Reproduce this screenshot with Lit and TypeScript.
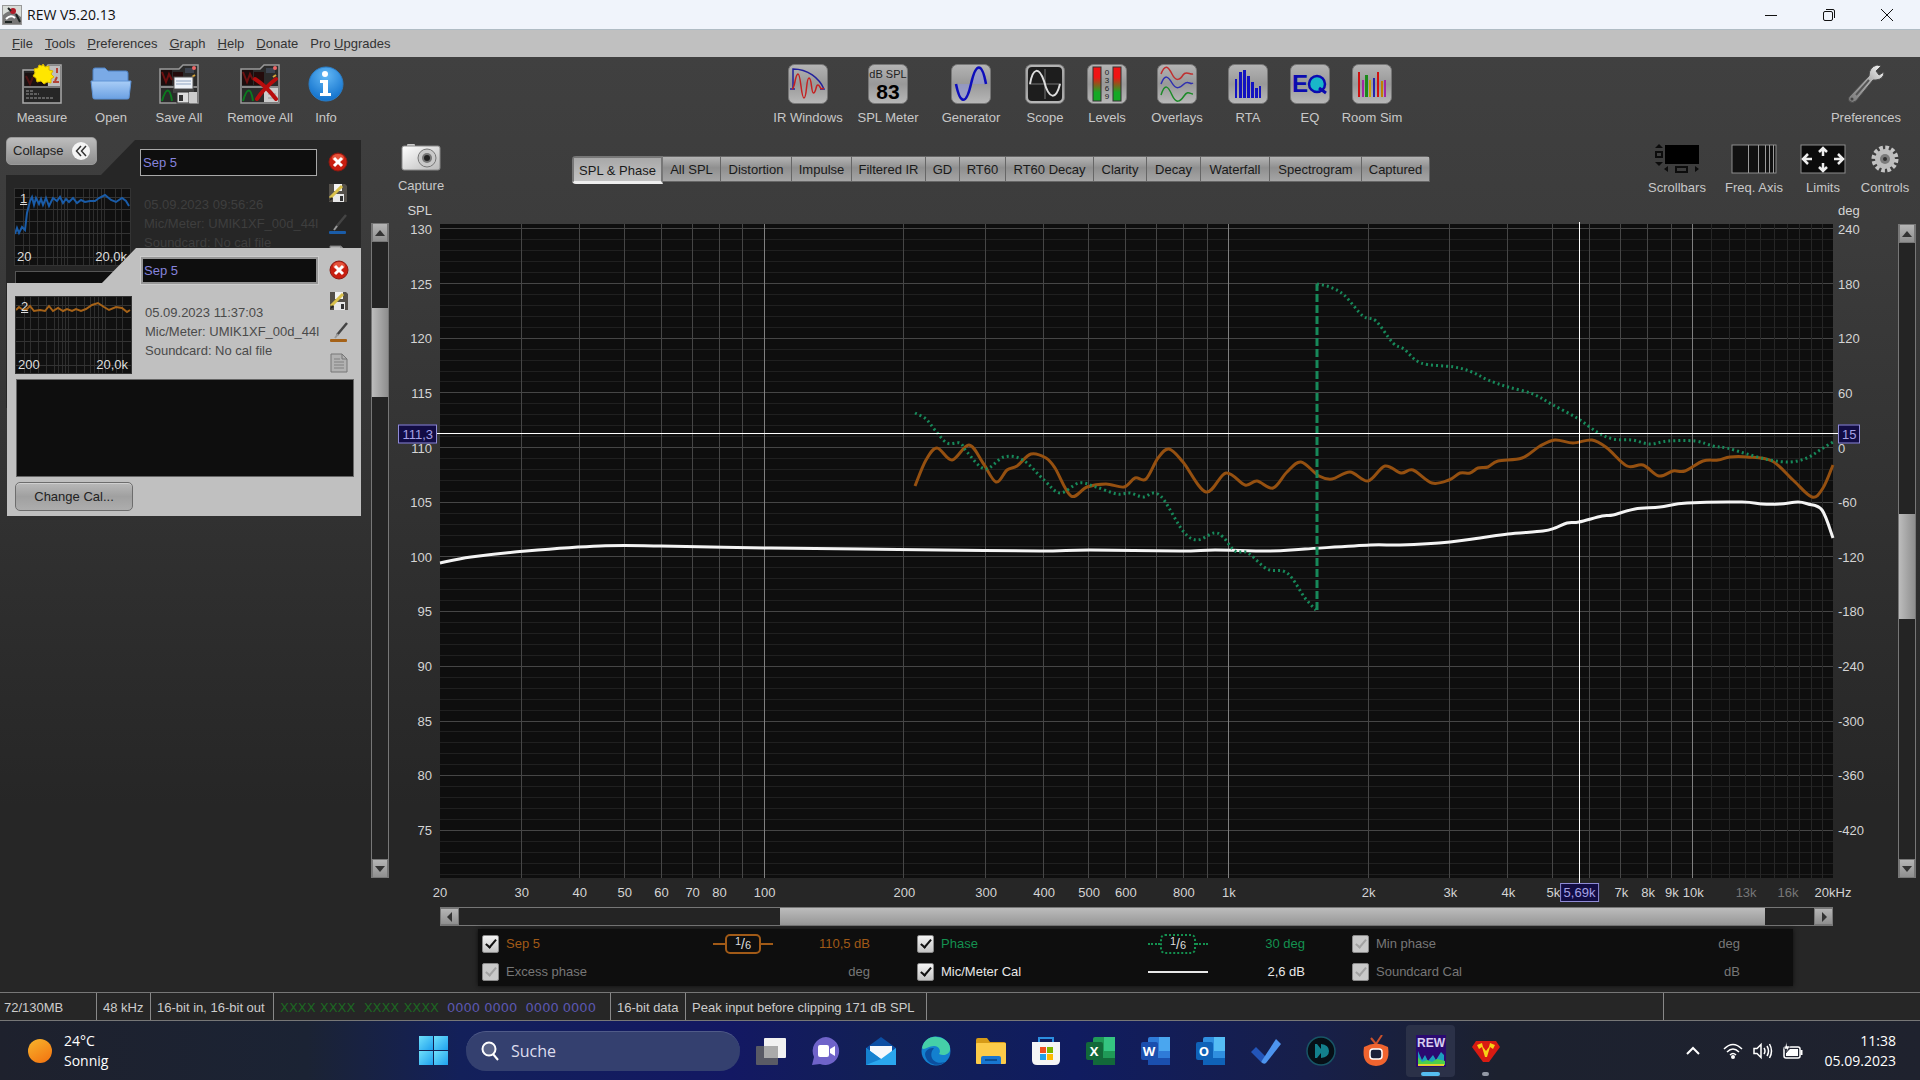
import { LitElement, html, svg, css, nothing, TemplateResult, SVGTemplateResult } from "lit";
import { customElement, property } from "lit/decorators.js";
import { classMap } from "lit/directives/class-map.js";

type Point = [number, number];

/* ---------- plot geometry and data ---------- */

const PLOT_W = 1393;
const PLOT_H = 654;
const F_MIN = 20;
const DECADES = 3;
const SPL_TOP = 130.4;
const SPL_SPAN = 59.8;

const freqPct = (f: number) => (Math.log10(f / F_MIN) / DECADES) * 100;
const splPct = (v: number) => ((SPL_TOP - v) / SPL_SPAN) * 100;

const xLabels: [number, string][] = [
  [20, "20"], [30, "30"], [40, "40"], [50, "50"], [60, "60"], [70, "70"], [80, "80"], [100, "100"],
  [200, "200"], [300, "300"], [400, "400"], [500, "500"], [600, "600"], [800, "800"], [1000, "1k"],
  [2000, "2k"], [3000, "3k"], [4000, "4k"], [5000, "5k"], [7000, "7k"], [8000, "8k"], [9000, "9k"],
  [10000, "10k"], [13000, "13k"], [16000, "16k"], [20000, "20kHz"],
];
const splLabels = [130, 125, 120, 115, 110, 105, 100, 95, 90, 85, 80, 75];
const degLabels = [240, 180, 120, 60, 0, -60, -120, -180, -240, -300, -360, -420];

const splTrace: Point[] = [
  [475, 262], [486, 236], [497, 224], [512, 236], [529, 221], [543, 239], [556, 258], [567, 246], [577, 242],
  [591, 230], [606, 234], [615, 244], [631, 272], [647, 263], [666, 260], [684, 263], [695, 254], [706, 255],
  [718, 234], [729, 225], [743, 238], [766, 268], [786, 249], [805, 261], [817, 257], [833, 264], [847, 248],
  [861, 238], [879, 252], [892, 255], [910, 248], [928, 257], [945, 242], [961, 249], [973, 246], [992, 259],
  [1009, 256], [1020, 249], [1030, 249], [1038, 244], [1048, 243], [1058, 237], [1082, 234], [1100, 222],
  [1115, 216], [1133, 219], [1152, 216], [1167, 224], [1187, 242], [1203, 241], [1219, 252], [1233, 247],
  [1245, 247], [1263, 237], [1278, 236], [1290, 233], [1307, 233], [1332, 237], [1353, 256], [1372, 273],
  [1383, 264], [1393, 241],
];
const phaseLow: Point[] = [
  [475, 189], [486, 195], [495, 206], [507, 219], [520, 219], [527, 228], [545, 245], [564, 233], [583, 236],
  [604, 256], [620, 269], [639, 259], [656, 263], [677, 270], [690, 269], [703, 273], [714, 269], [724, 276],
  [743, 307], [757, 316], [774, 309], [783, 313], [795, 327], [808, 329], [827, 345], [843, 347], [852, 354],
  [865, 374], [876, 386],
];
const phaseHigh: Point[] = [
  [877, 60], [890, 63], [904, 71], [923, 92], [936, 97], [953, 119], [964, 125], [981, 139], [1014, 143],
  [1032, 148], [1048, 156], [1068, 163], [1093, 170], [1113, 181], [1137, 194], [1157, 208], [1173, 215],
  [1192, 216], [1210, 220], [1228, 217], [1255, 217], [1273, 222], [1287, 224], [1307, 230], [1330, 236],
  [1350, 238], [1367, 234], [1380, 226], [1393, 218],
];
const calTrace: Point[] = [
  [0, 339], [31, 333], [86, 327], [160, 322], [221, 322], [324, 324], [420, 325], [500, 326], [600, 327],
  [650, 326], [740, 327], [775, 326], [830, 327], [865, 325], [930, 321], [960, 321], [1010, 318], [1040, 314],
  [1068, 310], [1103, 307], [1115, 304], [1127, 299], [1139, 298], [1162, 292], [1173, 291], [1195, 285],
  [1220, 283], [1247, 279], [1302, 278], [1322, 280], [1340, 280], [1358, 278], [1368, 280], [1382, 286],
  [1393, 314],
];

/* Cubic smoothing through the sample points. */
function smooth(p: Point[], t = 6): string {
  let d = `M${p[0][0]} ${p[0][1]}`;
  for (let i = 0; i < p.length - 1; i++) {
    const a = p[Math.max(0, i - 1)], b = p[i], c = p[i + 1], e = p[Math.min(p.length - 1, i + 2)];
    const c1x = b[0] + (c[0] - a[0]) / t, c1y = b[1] + (c[1] - a[1]) / t;
    const c2x = c[0] - (e[0] - b[0]) / t, c2y = c[1] - (e[1] - b[1]) / t;
    d += `C${c1x.toFixed(1)} ${c1y.toFixed(1)} ${c2x.toFixed(1)} ${c2y.toFixed(1)} ${c[0]} ${c[1]}`;
  }
  return d;
}

/* ---------- icons ---------- */

const ico = (w: number, h: number, body: SVGTemplateResult) =>
  html`<svg width=${w} height=${h} viewBox="0 0 ${w} ${h}" aria-hidden="true">${body}</svg>`;

const tile = (body: SVGTemplateResult) => ico(40, 40, svg`
  <defs><linearGradient id="tg" x1="0" y1="0" x2="0" y2="1"><stop offset="0" stop-color="#b4b4b4"/><stop offset=".5" stop-color="#999"/><stop offset="1" stop-color="#b8b8b8"/></linearGradient></defs>
  <rect x="0.5" y="0.5" width="39" height="39" rx="6" fill="url(#tg)" stroke="#777"/>${body}`);

const folderGrid = svg`
  <path d="M1 5H20L24 1H39V39H1Z" fill="#2b2b2b" stroke="#999" stroke-width="1.5"/>
  <rect x="2" y="6" width="11" height="15" fill="#1b0d0d"/><path d="M3 8l4 10 3-8 3 6" stroke="#6e1010" fill="none" stroke-width="2"/>
  <rect x="14" y="8" width="10" height="13" fill="#240b0b"/><path d="M2 23H38" stroke="#aaa" stroke-width="1.5"/>
  <path d="M3 37c4-14 8-14 10 0" stroke="#0b7a1e" fill="none" stroke-width="2"/>
  <rect x="26" y="4" width="9" height="5" fill="#3d4450"/><circle cx="35" cy="4" r="2" fill="#e66"/><path d="M33 13l3-2" stroke="#d7a63a" stroke-width="2"/>`;

const icons: Record<string, TemplateResult> = {
  measure: ico(40, 40, svg`
    <path d="M1 6H22L26 1H39V39H1Z" fill="#262626" stroke="#aaa" stroke-width="1.5"/>
    <rect x="3" y="9" width="22" height="13" fill="#1b1111"/><path d="M4 12l4 8 3-7" stroke="#4e1414" stroke-width="2" fill="none"/>
    <rect x="26" y="2" width="12" height="20" fill="#bdbdbd"/><path d="M35 4v5M35 13l-2 4M31 18h6" stroke="#b34336" stroke-width="2"/>
    <path d="M2 23H38" stroke="#ccc"/><path d="M4 27h8M4 30h13M4 34h28" stroke="#999" stroke-dasharray="3 1"/>
    <path d="M21 0l2 3 4-1 0 4 4 1-2 3 3 3-3 2 0 4-4-1-3 2-3-3-4 1-1-4-3-2 2-3-1-4 4-1 1-3 3 1z" fill="#ffe600" stroke="#d9b800"/>`),
  open: ico(42, 34, svg`
    <defs><linearGradient id="of" x1="0" y1="0" x2="0" y2="1"><stop offset="0" stop-color="#a9cdf7"/><stop offset="1" stop-color="#6ba0e2"/></linearGradient></defs>
    <path d="M3 3q0-2 2-2h10l3 3h18q2 0 2 2v10H3z" fill="#7aaae6" stroke="#4f82c4"/>
    <path d="M1 14h40l-2 17q0 1-2 1H5q-2 0-2-1z" fill="url(#of)" stroke="#5e93d6"/>`),
  save: ico(40, 40, svg`${folderGrid}
    <rect x="15" y="13" width="19" height="12" fill="#eef2f7" stroke="#555"/><path d="M17 17h15M17 20h15" stroke="#8ea3bf"/>
    <path d="M14 25h21v4H14z" fill="#444"/><rect x="18" y="28" width="12" height="11" fill="#ddd" stroke="#333"/><rect x="20" y="31" width="4" height="6" fill="#333"/>
    <path d="M30 28h8v11h-8z" fill="#ccc"/>`),
  remove: ico(40, 40, svg`${folderGrid}
    <path d="M24 24h14v14H24z" fill="#ccc"/><path d="M28 30h8M28 34h8" stroke="#999"/>
    <path d="M15 15Q26 22 36 35M36 15Q24 24 17 35" stroke="#b80c0c" stroke-width="4" fill="none" stroke-linecap="round"/>`),
  info: ico(36, 36, svg`
    <defs><radialGradient id="ig" cx=".5" cy=".25" r=".8"><stop offset="0" stop-color="#63b8f5"/><stop offset="1" stop-color="#0a6bc9"/></radialGradient></defs>
    <circle cx="18" cy="18" r="17" fill="url(#ig)" stroke="#2a7ec8"/>
    <circle cx="17" cy="8" r="3" fill="#fff"/><path d="M12 14h8v13h3v3H12v-3h3V17h-3z" fill="#fff"/>`),
  ir: tile(svg`<path d="M5 25V5C20 5 31 14 36 25H32" stroke="#22209c" stroke-width="1.5" fill="none"/><path d="M2 25h5" stroke="#22209c" stroke-width="1.5"/>
    <path d="M4 25C7 25 7 10 10 10C13 10 13 34 16 34C19 34 18 14 21 14C24 14 23 29 25.500 29C28 29 28 20 30 21C32 21 32 27 36 24" stroke="#c42121" stroke-width="1.5" fill="none"/>`),
  spl: tile(svg`<text x="20" y="14" text-anchor="middle" font-family="Liberation Sans" font-size="11" fill="#222">dB SPL</text>
    <text x="20" y="35" text-anchor="middle" font-family="Liberation Sans" font-weight="700" font-size="21" fill="#000">83</text>`),
  gen: tile(svg`<path d="M5 20H20Q14 52 5 20zM20 20Q28-14 36 20z" fill="#8f96d8" opacity=".6"/><path d="M5 20C9 40 15 42 20 20S31-2 35 20" stroke="#0d0dbb" stroke-width="2.5" fill="none"/>`),
  scope: tile(svg`<rect x="3" y="3" width="34" height="34" rx="4" fill="#1d1d1d"/><path d="M20 5v30M4 20h32" stroke="#777"/>
    <path d="M5 20C8 3 14 3 19 17C24 36 31 36 35 20" stroke="#ddd" stroke-width="2" fill="none"/>`),
  levels: tile(svg`<defs><linearGradient id="lv" x1="0" y1="0" x2="0" y2="1"><stop offset=".3" stop-color="#f01414"/><stop offset=".75" stop-color="#15a825"/></linearGradient></defs>
    <rect x="6" y="3" width="8" height="34" fill="url(#lv)" stroke="#333"/><rect x="26" y="3" width="8" height="34" fill="url(#lv)" stroke="#333"/>
    <g font-family="Liberation Sans" font-size="8" fill="#222" text-anchor="middle"><text x="20" y="11">0</text><text x="20" y="19">3</text><text x="20" y="27">6</text><text x="20" y="35">9</text></g>`),
  overlays: tile(svg`<g fill="none" stroke-width="1.5"><path d="M4 10C8 0 11 2 15 10S23 16 26 11S33 11 36 10" stroke="#c03030"/><path d="M4 20C8 10 11 12 15 19S23 24 27 20S33 21 36 19" stroke="#3030b0"/><path d="M4 31C8 19 11 22 15 31S23 38 27 32S33 30 36 30" stroke="#1c8a28"/></g>`),
  rta: tile(svg`<g fill="#1212c0"><rect x="7" y="15" width="2" height="19"/><rect x="11" y="8" width="3" height="26"/><rect x="15" y="6" width="3" height="28"/><rect x="19" y="12" width="3" height="22"/><rect x="23" y="18" width="3" height="16"/><rect x="27" y="24" width="3" height="10"/><rect x="31" y="22" width="2" height="12"/></g>`),
  eq: tile(svg`<text x="2" y="28" font-family="Liberation Sans" font-weight="700" font-size="24" fill="#0b0bb0">E</text>
    <circle cx="27" cy="20" r="8" fill="#19b7c9" stroke="#0b0bb0" stroke-width="2.5"/><path d="M29 24l7 5" stroke="#0b0bb0" stroke-width="3"/>`),
  room: tile(svg`<g><rect x="6" y="8" width="2" height="25" fill="#d01010"/><rect x="10" y="16" width="2" height="17" fill="#a326a3"/><rect x="13" y="11" width="3" height="22" fill="#1b8a1b"/><rect x="17" y="16" width="2" height="17" fill="#d0a000"/><rect x="21" y="14" width="2" height="19" fill="#2222b0"/><rect x="25" y="8" width="2" height="25" fill="#d01010"/><rect x="29" y="17" width="2" height="16" fill="#c08000"/><rect x="32" y="16" width="2" height="17" fill="#a326a3"/></g>`),
  wrench: ico(38, 40, svg`<defs><linearGradient id="wr" x1="0" y1="1" x2="1" y2="0"><stop offset="0" stop-color="#777"/><stop offset=".6" stop-color="#b0b0b0"/><stop offset="1" stop-color="#fff"/></linearGradient></defs>
    <path d="M2 33L22 12Q22 3 30 1l4 1-5 5 3 4 5-3q0 7-8 8l-3 0L9 37q-4 3-7 0-1-2 0-4z" fill="url(#wr)" stroke="#4a4a4a"/><circle cx="5" cy="35" r="1.5" fill="#444"/><path d="M9 31L22 16" stroke="#555" stroke-width="2"/>`),
  camera: ico(40, 28, svg`<defs><linearGradient id="cam" x1="0" y1="0" x2="1" y2="1"><stop offset="0" stop-color="#fff"/><stop offset="1" stop-color="#b9b9b9"/></linearGradient></defs>
    <rect x="6" y="1" width="8" height="4" rx="1" fill="#ccc"/><rect x="1" y="3" width="38" height="24" rx="2" fill="url(#cam)" stroke="#888"/>
    <circle cx="26" cy="15" r="9" fill="#c9c9c9" stroke="#777"/><circle cx="26" cy="15" r="5" fill="#777"/><circle cx="26" cy="15" r="3" fill="#222"/>`),
  bars: ico(46, 30, svg`<path d="M1 4l4-4 4 4zM1 18l4 4 4-4z" fill="#0c0c0c"/><rect x="2" y="8" width="6" height="5" fill="none" stroke="#0c0c0c" stroke-width="2"/>
    <rect x="11" y="1" width="34" height="19" fill="#000"/><path d="M14 22v6l-4-3zM41 22v6l4-3z" fill="#0c0c0c"/><rect x="22" y="23" width="11" height="5" fill="none" stroke="#0c0c0c" stroke-width="2"/>`),
  freq: ico(46, 30, svg`<rect x="1" y="1" width="44" height="28" fill="#111" stroke="#8c8c8c"/><path d="M17.5 1v28M27.5 1v28M34.5 1v28M38.5 1v28M42.5 1v28" stroke="#9a9a9a"/>`),
  limits: ico(46, 30, svg`<rect x="1" y="1" width="44" height="28" fill="#0b0b0b" stroke="#8c8c8c"/>
    <path d="M23 12V4M19 8l4-4 4 4M23 19v7M19 23l4 4 4-4M12 15H3M8 10l-5 5 5 5M34 15h9M38 10l5 5-5 5" stroke="#eee" stroke-width="2.5" fill="none"/>`),
  gear: ico(28, 30, svg`<circle cx="14" cy="15" r="11" fill="none" stroke="#c4c4c4" stroke-width="5" stroke-dasharray="3.5 2.25"/>
    <circle cx="14" cy="15" r="10" fill="#bdbdbd"/><circle cx="14" cy="15" r="5" fill="#7b7b7b"/><circle cx="14" cy="15" r="2" fill="#303030"/>`),
};

const tbIcon = (body: SVGTemplateResult) => ico(32, 32, body);
const office = (letter: string, dark: string, mid: string, light: string) => tbIcon(svg`
  <rect x="8" y="2" width="22" height="28" rx="2" fill=${mid}/><rect x="19" y="2" width="11" height="14" fill=${light}/><rect x="8" y="16" width="22" height="7" fill=${mid}/><rect x="8" y="23" width="22" height="7" fill=${dark}/>
  <rect x="1" y="7" width="17" height="18" rx="2" fill=${dark}/><text x="9" y="21" text-anchor="middle" font-family="Open Sans" font-weight="700" font-size="13" fill="#fff">${letter}</text>`);

const taskIcons: { name: string; icon: TemplateResult; state?: string }[] = [
  { name: "Task View", icon: tbIcon(svg`<rect x="9" y="3" width="22" height="20" rx="1" fill="#f1f1f1"/><rect x="1" y="11" width="22" height="19" rx="1" fill="#666" opacity=".85"/><rect x="9" y="11" width="14" height="12" fill="#aaa"/>`) },
  { name: "Chat", icon: tbIcon(svg`<path d="M16 2a14 14 0 1 1-6 27l-8 1 2-8A14 14 0 0 1 16 2z" fill="#6f63c9"/><rect x="8" y="10" width="11" height="12" rx="2" fill="#fff"/><path d="M20 14l5-3v10l-5-3z" fill="#fff"/>`) },
  { name: "Mail", icon: tbIcon(svg`<path d="M1 13L16 2l15 11v3H1z" fill="#0b4fa4"/><path d="M5 11h22v14H5z" fill="#f4f8fc"/><path d="M1 13v17h30V13L16 24z" fill="#2aa7ee"/><path d="M1 13l15 11L1 30z" fill="#1581cf"/>`) },
  { name: "Edge", icon: tbIcon(svg`<circle cx="16" cy="16" r="14.500" fill="#1380cf"/><path d="M2 13C4 4 11 1 17 2c9 1 14 7 13 13-1 5-7 6-11 4 2-2 1-8-5-8-6 0-10 5-12 2z" fill="#45cfa8"/><path d="M12 16c-3 8 4 14 13 11-8 6-19 2-20-8 1-5 5-6 9-6z" fill="#0c4f9f"/>`) },
  { name: "Explorer", icon: tbIcon(svg`<path d="M1 5q0-2 2-2h9l3 4h14q2 0 2 2v4H1z" fill="#d79b17"/><rect x="1" y="8" width="30" height="21" rx="1" fill="#fccb49"/><path d="M6 29v-6q0-2 2-2h16q2 0 2 2v6z" fill="#1876d1"/><path d="M10 25h12" stroke="#0b4f95" stroke-width="2"/>`) },
  { name: "Store", icon: tbIcon(svg`<path d="M9 8V3h14v5" fill="none" stroke="#2b8ee0" stroke-width="2"/><path d="M2 7h28v18q0 5-5 5H7q-5 0-5-5z" fill="#f5f5f5"/><rect x="10" y="12" width="6" height="6" fill="#ef4f21"/><rect x="17" y="12" width="6" height="6" fill="#7db700"/><rect x="10" y="19" width="6" height="6" fill="#20a0ea"/><rect x="17" y="19" width="6" height="6" fill="#fdb900"/>`) },
  { name: "Excel", icon: office("X", "#12693a", "#1f9a57", "#35c481") },
  { name: "Word", icon: office("W", "#1a4fae", "#2f7bd8", "#4aa6ef") },
  { name: "Outlook", icon: office("O", "#0f62b8", "#2f8fe0", "#55bdf5") },
  { name: "To Do", icon: tbIcon(svg`<path d="M1 17l5-5 10 10-5 5z" fill="#2355b8"/><path d="M11 27L26 4l5 5-15 19q-2 2-5-1z" fill="#4d94ee"/>`) },
  { name: "Player", icon: tbIcon(svg`<circle cx="16" cy="16" r="14" fill="#060f16" stroke="#185566" stroke-width="1.500"/><path d="M10 9h2l4 5V9q8 1 8 7t-8 7v-5l-4 5h-2z" fill="#13808c"/>`) },
  { name: "TV", icon: tbIcon(svg`<path d="M11 3l5 6M22 0l-6 9" stroke="#c9512c" stroke-width="2"/><path d="M4 12q12-7 24 0 3 18-12 19Q1 30 4 12z" fill="#f0642f"/><rect x="10" y="14" width="12" height="10" rx="3" fill="#1a2038" stroke="#fff" stroke-width="1.500"/>`) },
  { name: "REW", state: "active", icon: tbIcon(svg`<rect x="1" y="0" width="30" height="32" fill="#2b0a70"/><text x="16" y="12" text-anchor="middle" font-family="Liberation Sans" font-weight="700" font-size="12" fill="#d8cff0">REW</text>
    <path d="M3 29V16l4 9 3-5 3 6 5-6 3 5 5-8 3 3v9z" fill="#1c9fbd"/><path d="M3 30v-8l4 5 5-2 5 2 5-3 8 2v4z" fill="#4bd04a"/><path d="M3 30h26" stroke="#e0d030" stroke-width="2"/>`) },
  { name: "V", state: "running", icon: tbIcon(svg`<path d="M6 6h20l4 6-11 15h-6L2 12z" fill="#d81b12"/><path d="M7 10l5-2 1 4 3 4 3-4 1-4 5 2-2 4-3-2-3 10h-2L12 12l-3 2z" fill="#f7d117"/><path d="M13 6h6l-3 9z" fill="#d81b12"/>`) },
];

/* ---------- scrollbar ---------- */

@customElement("rew-scrollbar")
export class RewScrollbar extends LitElement {
  @property() orientation: "vertical" | "horizontal" = "vertical";
  @property({ type: Number }) start = 0;
  @property({ type: Number }) size = 50;

  static styles = css`
    :host { display: flex; }
    .bar { display: flex; flex: 1; box-sizing: border-box; background: #242424; border: 1px solid #777; }
    .bar.vertical { flex-direction: column; border-width: 0 1px; }
    .bar.horizontal { border-width: 1px 0; }
    button { flex: none; display: grid; place-items: center; width: 19px; height: 19px; padding: 0; border: 1px solid #777; background: linear-gradient(#b5b5b5, #8f8f8f); }
    .vertical button { width: 100%; }
    .horizontal button { height: 100%; }
    .track { flex: 1; display: flex; }
    .vertical .track { flex-direction: column; }
    .thumb { background: linear-gradient(90deg, #bcbcbc, #8e8e8e); }
    .horizontal .thumb { background: linear-gradient(#bcbcbc, #969696); }
  `;

  render() {
    const v = this.orientation === "vertical";
    const arrow = (d: string) => html`<svg width="10" height="10" viewBox="0 0 10 10"><path d=${d} fill="#333" /></svg>`;
    return html`<div class=${classMap({ bar: true, [this.orientation]: true })}>
      <button aria-label="Scroll back">${arrow(v ? "M0 8L5 2L10 8z" : "M7 0L2 5L7 10z")}</button>
      <div class="track">
        <div style="flex:${this.start} 0 0px"></div>
        <div class="thumb" style="flex:${this.size} 0 0px"></div>
        <div style="flex:${100 - this.start - this.size} 0 0px"></div>
      </div>
      <button aria-label="Scroll forward">${arrow(v ? "M0 2L5 8L10 2z" : "M3 0L8 5L3 10z")}</button>
    </div>`;
  }
}

/* ---------- measurement card ---------- */

@customElement("measurement-card")
export class MeasurementCard extends LitElement {
  @property({ type: Number }) index = 1;
  @property() name = "";
  @property() stamp = "";
  @property() low = "";
  @property() trace = "#1e62b4";
  @property() path = "";
  @property({ type: Boolean }) selected = false;

  static styles = css`
    :host { display: block; }
    .card { height: 268px; box-sizing: border-box; background: #262626; color: #3e3e3e; font: 13px/19px "Liberation Sans", Arial, sans-serif;
      clip-path: polygon(0 35px, 95px 35px, 129px 0, 100% 0, 100% 100%, 0 100%); }
    .card.selected { background: #c0c0c0; color: #4a4a4a; }
    .top { display: grid; grid-template-columns: 117px 177px 24px; column-gap: 9px; padding-left: 8px; height: 131px; }
    .top > * { min-width: 0; }
    .thumb { display: grid; margin-top: 48px; height: 78px; background: #101010; border: 1px solid #333; box-sizing: border-box; }
    .thumb > * { grid-area: 1 / 1; }
    .thumb svg { width: 100%; height: 100%; }
    .marks { display: grid; grid-template-columns: auto auto; align-content: space-between; padding: 1px 3px 0 2px; color: #ddd; line-height: 17px; z-index: 1; }
    .marks .index { grid-column: 1 / 3; justify-self: start; text-decoration: underline; padding-left: 3px; }
    .marks .high { justify-self: end; }
    .mid { display: flex; flex-direction: column; padding-top: 9px; }
    input { box-sizing: border-box; width: 100%; height: 27px; padding: 0 2px; font: inherit; color: #8683dd; background: #0e0e0e; border: 1px solid #a8a8a8; outline: none; }
    .selected input { border: 2px solid #969696; padding: 0 1px; outline: 1px solid #ccc; }
    .info { margin: 19px 0 0; padding-left: 4px; white-space: nowrap; }
    .tools { display: flex; flex-direction: column; align-items: center; gap: 11px; padding-top: 12px; }
    .tools button { display: block; width: 20px; height: 20px; padding: 0; border: 0; background: none; }
    .notes { display: block; box-sizing: border-box; width: calc(100% - 16px); height: 98px; margin: 0 7px 0 9px; background: #0e0e0e; border: 1px solid #555; resize: none; }
    .selected .notes { border-color: #666; }
    .cal { display: block; width: 118px; height: 29px; margin: 5px 0 0 8px; font: inherit; color: #222; border: 1px solid #6d6d6d; border-radius: 5px; background: linear-gradient(#b9b9b9, #a0a0a0 50%, #adadad); box-shadow: inset 0 1px #d0d0d0; }
  `;

  render() {
    const gx = [8, 14, 22, 30, 38, 42, 46, 49, 52, 60, 68, 74, 78, 82, 86, 89, 100, 106];
    return html`<article class=${classMap({ card: true, selected: this.selected })}>
      <div class="top">
        <div class="thumb">
          <svg viewBox="0 0 115 76" preserveAspectRatio="none">
            ${gx.map((x) => svg`<path d="M${x}.5 0V76" stroke="#2e2e2e"/>`)}
            ${[8, 20, 32, 44, 56, 68].map((y) => svg`<path d="M0 ${y}.5H115" stroke="#333"/>`)}
            <path d=${this.path} fill="none" stroke=${this.trace} stroke-width="2" />
          </svg>
          <div class="marks"><span class="index">${this.index}</span><span>${this.low}</span><span class="high">20,0k</span></div>
        </div>
        <div class="mid">
          <input aria-label="Measurement name" .value=${this.name} />
          <p class="info">${this.stamp}<br />Mic/Meter: UMIK1XF_00d_44l<br />Soundcard: No cal file</p>
        </div>
        <div class="tools">
          <button aria-label="Remove">${ico(20, 20, svg`<circle cx="10" cy="10" r="9" fill="#c81e10" stroke="#8c1a12"/><ellipse cx="10" cy="6" rx="6" ry="4" fill="#ef6a4e" opacity=".7"/><path d="M6 6l8 8M14 6l-8 8" stroke="#fff" stroke-width="3"/>`)}</button>
          <button aria-label="Save">${ico(20, 20, svg`<path d="M1 1h16l2 2v16H1z" fill="#54504a"/><rect x="6" y="1" width="8" height="7" fill="#f3f3f3"/><rect x="5" y="11" width="11" height="8" fill="#e8e8e8"/><rect x="12" y="13" width="3" height="5" fill="#333"/><path d="M2 15L14 3" stroke="#d9c04a" stroke-width="3"/><path d="M1 18l2-4 2 2z" fill="#222"/>`)}</button>
          <button aria-label="Trace colour">${ico(20, 20, svg`<path d="M8 13L18 1" stroke="#444" stroke-width="2.500"/><path d="M6 16l3-4" stroke="#999" stroke-width="2"/><rect x="1" y="17" width="17" height="3" rx="1" fill=${this.trace}/>`)}</button>
          <button aria-label="Notes">${ico(20, 20, svg`<path d="M2 1h11l5 5v13H2z" fill="#b2b2b2" stroke="#777"/><path d="M13 1v5h5" fill="none" stroke="#777"/><path d="M5 6h6M5 9h10M5 12h10M5 15h10" stroke="#808080"/>`)}</button>
        </div>
      </div>
      <textarea class="notes" aria-label="Measurement notes"></textarea>
      <button class="cal">Change Cal...</button>
    </article>`;
  }
}

/* ---------- chart ---------- */

@customElement("spl-chart")
export class SplChart extends LitElement {
  @property({ type: Number }) cursorSpl = 111.2;
  @property({ type: Number }) cursorFreq = 5690;

  static styles = css`
    :host { display: grid; grid-template-columns: 51px minmax(0, 1fr) 65px 18px 4px; grid-template-rows: 22px minmax(0, 1fr) 29px 19px; color: #d4d4d4; font: 13px/16px "Liberation Sans", Arial, sans-serif; }
    .axis { grid-row: 1 / 3; display: flex; flex-direction: column; position: relative; padding: 1px 0 39px; }
    .left { text-align: right; padding-right: 8px; }
    .right { padding-left: 5px; }
    .axis ol { flex: 1; display: flex; flex-direction: column; justify-content: space-between; list-style: none; margin: 3px 0 0; padding: 0; }
    .marker { position: absolute; border: 1px solid #8f8bd6; background: #120c44; color: #a6a2e6; padding: 0 3px; line-height: 17px; transform: translateY(-50%); z-index: 1; }
    .left .marker { right: 3px; }
    .right .marker { left: 5px; }
    .marker-lane { position: absolute; inset: 22px 0 0; }
    .marker.freq { transform: translateX(-50%); top: 5px; }
    .plot { grid-area: 2 / 2; width: 100%; height: 100%; display: block; background: #0e0e0e; overflow: visible; }
    .plot path { vector-effect: non-scaling-stroke; fill: none; }
    .minor { stroke: #202020; }
    .fine { stroke: #262626; }
    .major { stroke: #464646; }
    .decade { stroke: #808080; }
    .spl { stroke: #955010; stroke-width: 3; }
    .phase { stroke: #17895a; stroke-width: 3; stroke-dasharray: 2 3; }
    .phase.wrap { stroke-dasharray: 8 3; }
    .cal { stroke: #f4f4f4; stroke-width: 3; }
    .cross { stroke: #fff; }
    .xaxis { grid-area: 3 / 2; position: relative; }
    .tick { position: absolute; top: 7px; transform: translateX(-50%); }
    .tick.dim { color: #777; }
    .vbar { grid-area: 2 / 4; }
    .hbar { grid-area: 4 / 2; }
  `;

  private line(cls: string, d: string) {
    return svg`<path class=${cls} d=${d} />`;
  }

  private gridX(f: number) {
    return Math.round((freqPct(f) / 100) * PLOT_W) - 0.5;
  }

  private grid() {
    const out: unknown[] = [];
    for (let v = 71; v <= 130; v++) {
      const y = Math.round((splPct(v) / 100) * PLOT_H) + 0.5;
      out.push(this.line(v % 5 ? "minor" : "major", `M0 ${y}H${PLOT_W}`));
    }
    for (let dec = 10; dec <= 10000; dec *= 10)
      for (let m = 1; m < 10; m++) {
        const f = dec * m;
        if (f < 30 || f > 10000) continue;
        out.push(this.line(m === 1 ? "decade" : "major", `M${this.gridX(f)} 0V${PLOT_H}`));
      }
    for (let f = 11000; f < 20000; f += 1000) out.push(this.line("fine", `M${this.gridX(f)} 0V${PLOT_H}`));
    return out;
  }

  render() {
    const cy = Math.round((splPct(this.cursorSpl) / 100) * PLOT_H) - 0.5;
    const cx = this.gridX(this.cursorFreq);
    return html`
      <div class="axis left">
        <span>SPL</span>
        <ol>${splLabels.map((v) => html`<li>${v}</li>`)}</ol>
        <div class="marker-lane"><span class="marker" style="top:${splPct(this.cursorSpl)}%">111,3</span></div>
      </div>
      <svg class="plot" viewBox="0 0 ${PLOT_W} ${PLOT_H}" preserveAspectRatio="none" role="img" aria-label="SPL and phase against frequency">
        ${this.grid()}
        ${this.line("cal", smooth(calTrace))}
        ${this.line("spl", smooth(splTrace))}
        ${this.line("phase", smooth(phaseLow))}
        ${this.line("phase wrap", "M877 386V60")}
        ${this.line("phase", smooth(phaseHigh))}
        ${this.line("cross", `M-3 ${cy}H${PLOT_W + 5}`)}
        ${this.line("cross", `M${cx} -2V${PLOT_H + 5}`)}
      </svg>
      <div class="axis right">
        <span>deg</span>
        <ol>${degLabels.map((v) => html`<li>${v}</li>`)}</ol>
        <div class="marker-lane"><span class="marker" style="top:${splPct(this.cursorSpl)}%">15</span></div>
      </div>
      <rew-scrollbar class="vbar" .start=${44} .size=${17}></rew-scrollbar>
      <div class="xaxis">
        ${xLabels.map(([f, t]) => html`<span class=${classMap({ tick: true, dim: f === 13000 || f === 16000 })} style="left:${freqPct(f)}%">${t}</span>`)}
        <span class="marker freq" style="left:${freqPct(this.cursorFreq)}%">5,69k</span>
      </div>
      <rew-scrollbar class="hbar" orientation="horizontal" .start=${23.700} .size=${72.700}></rew-scrollbar>
    `;
  }
}

/* ---------- application ---------- */

interface Tool { label: string; icon: string }
interface Trace { label: string; value: string; tone: string; symbol?: "solid" | "dotted" | "line"; on: boolean }

const fileTools: Tool[] = [
  { label: "Measure", icon: "measure" }, { label: "Open", icon: "open" }, { label: "Save All", icon: "save" },
  { label: "Remove All", icon: "remove" }, { label: "Info", icon: "info" },
];
const viewTools: Tool[] = [
  { label: "IR Windows", icon: "ir" }, { label: "SPL Meter", icon: "spl" }, { label: "Generator", icon: "gen" },
  { label: "Scope", icon: "scope" }, { label: "Levels", icon: "levels" }, { label: "Overlays", icon: "overlays" },
  { label: "RTA", icon: "rta" }, { label: "EQ", icon: "eq" }, { label: "Room Sim", icon: "room" },
];
const graphTools: Tool[] = [
  { label: "Scrollbars", icon: "bars" }, { label: "Freq. Axis", icon: "freq" },
  { label: "Limits", icon: "limits" }, { label: "Controls", icon: "gear" },
];
const tabs = ["SPL & Phase", "All SPL", "Distortion", "Impulse", "Filtered IR", "GD", "RT60", "RT60 Decay", "Clarity", "Decay", "Waterfall", "Spectrogram", "Captured"];
const traces: Trace[] = [
  { label: "Sep 5", value: "110,5 dB", tone: "orange", symbol: "solid", on: true },
  { label: "Phase", value: "30 deg", tone: "green", symbol: "dotted", on: true },
  { label: "Min phase", value: "deg", tone: "grey", on: false },
  { label: "Excess phase", value: "deg", tone: "grey", on: false },
  { label: "Mic/Meter Cal", value: "2,6 dB", tone: "white", symbol: "line", on: true },
  { label: "Soundcard Cal", value: "dB", tone: "grey", on: false },
];
const menus: [string, string, string][] = [
  ["", "F", "ile"], ["", "T", "ools"], ["", "P", "references"], ["", "G", "raph"], ["", "H", "elp"], ["", "D", "onate"], ["Pro ", "U", "pgrades"],
];

const thumb1 = "M0 45L2 39L4 44L7 38L10 41L12 24L15 12L17 8L19 16L21 9L24 15L26 10L28 16L31 9L34 17L38 9L42 12L45 8L48 14L51 10L54 13L58 9L62 14L66 11L70 13L75 12L80 12L84 9L90 6L96 11L101 13L107 9L111 12L114 17";
const thumb2 = "M0 13L3 10L7 13L11 12L14 9L18 14L24 13L29 14L33 9L37 14L42 11L47 14L51 12L56 14L60 12L65 14L70 12L76 8L82 6L88 10L93 13L100 10L106 11L111 15L114 13";

@customElement("app-root")
export class AppRoot extends LitElement {
  static styles = css`
    :host { display: flex; flex-direction: column; min-height: 100vh; font: 13px/16px "Liberation Sans", Arial, sans-serif; color: #ccc; background: #262626; }
    button { font: inherit; color: inherit; border: 0; padding: 0; background: none; }
    svg { display: block; }

    .titlebar { display: flex; align-items: center; height: 29px; background: #f0f4fb; color: #111; font: 14px/20px "Open Sans", "Noto Sans", sans-serif; padding: 0 4px 0 2px; gap: 5px; }
    .titlebar h1 { flex: 1; margin: 0; font: inherit; }
    .window { display: flex; }
    .window button { width: 58px; height: 29px; display: grid; place-items: center; }
    .menubar { display: flex; align-items: center; gap: 12px; height: 28px; padding-left: 12px; background: #c0c0c0; color: #333; box-sizing: border-box; border-top: 1px solid #b0bcc4; }

    .main { flex: 1; display: flex; flex-direction: column; background: linear-gradient(#404040, #3c3c3c 18%, #262626 80%); }
    .toolbar { display: flex; justify-content: space-between; height: 73px; box-sizing: border-box; padding: 7px 4px 0 0; }
    .toolbar > .tool { width: 100px; }
    .tools { display: grid; }
    .tools.file { grid-template-columns: 84px 54px 82px 80px 52px; }
    .tools.view { grid-template-columns: 80px 80px 86px 62px 62px 78px 64px 60px 64px; padding-left: 4px; }
    .tool { display: flex; flex-direction: column; align-items: center; gap: 6px; white-space: nowrap; color: #c8c8c8; }
    .tool .pic { height: 40px; display: grid; place-items: center; }
    .tool.small .pic { height: 30px; }

    .work { flex: 1; display: grid; grid-template-columns: 371px 18px minmax(0, 1fr); }
    .side { display: flex; flex-direction: column; align-items: stretch; padding: 7px 10px 0 6px; }
    .collapse { align-self: flex-start; display: flex; align-items: center; gap: 8px; height: 28px; padding: 0 6px; position: relative; z-index: 1; color: #222; border: 1px solid #999; border-radius: 5px; background: linear-gradient(#bdbdbd, #8f8f8f); box-sizing: border-box; }
    .cards { display: flex; flex-direction: column; margin-top: -25px; height: 408px; }
    .cards measurement-card + measurement-card { margin: -160px 0 0 1px; z-index: 1; }
    .sidebar { margin: 93px 0 114px; }

    .graph { display: flex; flex-direction: column; min-width: 0; }
    .head { display: flex; align-items: flex-start; height: 72px; padding-right: 5px; }
    .capture { width: 64px; padding-top: 12px; }
    .tabs { flex: 0 1 858px; margin: 26px auto 0 119px; height: 28px; display: grid; grid-template-columns: 91fr 58fr 71fr 60fr 74fr 34fr 46fr 88fr 53fr 54fr 69fr 92fr 68fr; border-radius: 4px; overflow: hidden; }
    .tabs button { height: 26px; padding-top: 2px; color: #1a1a1a; white-space: nowrap; background: linear-gradient(#b4b4b4, #8f8f8f 45%, #a5a5a5); border: 1px solid #666; border-width: 1px 1px 1px 0; }
    .tabs button[aria-selected="true"] { height: 28px; background: linear-gradient(#a8a8a8, #c2c2c2); border: 2px solid #777; border-bottom: 3px solid #eee; }
    .settings { display: grid; grid-template-columns: 80px 74px 64px 60px; padding-top: 14px; }
    spl-chart { flex: 1; min-height: 400px; }

    .legend { display: grid; grid-template-columns: repeat(3, minmax(0, 1fr)); grid-template-rows: 29px 28px; margin: 3px 127px 6px 89px; padding: 0 6px 0 4px; background: #0e0e0e; box-shadow: 0 0 4px #0e0e0e; }
    .trace { display: grid; grid-template-columns: 24px minmax(0, 1fr) 60px 97px; align-items: center; padding-right: 47px; }
    .trace .value { text-align: right; }
    .orange { color: #a15a17; } .green { color: #149150; } .grey { color: #777; } .white { color: #e8e8e8; }
    .trace input { appearance: none; box-sizing: border-box; width: 17px; height: 18px; margin: 0; border: 1px solid #888; border-radius: 2px; background: linear-gradient(#f4f4f4, #c4c4c4); display: grid; place-items: center; }
    .trace input::before { content: ""; width: 4px; height: 9px; margin-bottom: 3px; border: solid #111; border-width: 0 2px 2px 0; transform: rotate(40deg); }
    .grey input { background: #c9c9c9; }
    .grey input::before { border-color: #a2a2a2; }
    .symbol { display: flex; align-items: center; }
    .symbol::before, .symbol::after { content: ""; flex: 1; border-top: 2px solid; }
    .symbol.dotted::before, .symbol.dotted::after { border-top-style: dotted; }
    .symbol button { display: flex; align-items: center; justify-content: center; height: 20px; width: 36px; box-sizing: border-box; border: 2px solid #a15a17; border-radius: 5px; color: #ddd; font-size: 14px; line-height: 14px; }
    .symbol sup, .symbol sub { font-size: 11px; line-height: 11px; vertical-align: baseline; }
    .symbol sup { padding-bottom: 4px; }
    .symbol sub { padding-top: 4px; }
    .symbol.dotted button { border: 2px dotted #149150; }

    .status { display: flex; height: 29px; box-sizing: border-box; border: solid #777; border-width: 1px 0; background: #262626; white-space: nowrap; line-height: 29px; }
    .status > span { box-sizing: border-box; border-right: 1px solid #888; padding-left: 6px; }
    .status > .mem { flex: 0 0 97px; padding-left: 4px; }
    .status > .rate { flex: 0 0 54px; }
    .status > .bits { flex: 0 0 123px; }
    .status > .mask { flex: 0 0 337px; display: flex; gap: 8px; white-space: pre; font: 13px/29px "DejaVu Sans", sans-serif; }
    .status .xs { color: #1d6522; } .status .zeros { color: #5b57b0; }
    .status > .data { flex: 0 0 75px; }
    .status > .peak { flex: 0 0 241px; }
    .status > .blank { flex: 0 0 737px; }

    .taskbar { display: grid; grid-template-columns: 1fr auto 1fr; align-items: center; height: 59px; color: #fff; font: 14px/20px "Open Sans", "Noto Sans", sans-serif;
      background: linear-gradient(90deg, #1e212d, #1b2334 16%, #13205a 24%, #131863 38%, #122055 46%, #101c60 56%, #171f4a 68%, #1c212f 78%, #1f222e); }
    .weather { display: flex; align-items: center; gap: 12px; padding-left: 28px; justify-self: start; text-align: left; }
    .sun { width: 24px; height: 24px; border-radius: 50%; background: linear-gradient(150deg, #f8b52c, #f2700f); }
    .dock { display: flex; align-items: center; padding-left: 12px; }
    .start { display: grid; grid-template-columns: 14px 14px; gap: 1px; margin-right: 18px; }
    .start i { height: 14px; background: linear-gradient(135deg, #6fe0fb, #1ea0ee); }
    .search { display: flex; align-items: center; gap: 12px; flex: none; width: 274px; height: 40px; box-sizing: border-box; padding: 0 15px; border-radius: 20px; background: #34406f; border-top: 1px solid #505b88; margin-right: 3px; }
    .search input { flex: 1; min-width: 0; border: 0; outline: 0; background: none; color: #fff; font: 16px/20px "Open Sans", "Noto Sans", sans-serif; padding: 0; }
    .search input::placeholder { color: #dde; opacity: 1; }
    .app { flex: none; width: 55px; height: 52px; display: grid; place-items: center; position: relative; }
    .app.active::before { content: ""; position: absolute; inset: 0 3px; background: #2b3148; border-radius: 4px; }
    .app svg { position: relative; }
    .app.active::after, .app.running::after { content: ""; position: absolute; bottom: 1px; height: 4px; border-radius: 2px; width: 19px; background: #55bdf0; }
    .app.running::after { width: 7px; background: #9298a5; }
    .tray { justify-self: end; display: flex; align-items: center; gap: 10px; padding-right: 24px; }
    .tray .more { margin-right: 12px; }
    .clock { margin-left: 12px; text-align: right; }
  `;

  private tool(t: Tool, small = false) {
    return html`<button class=${classMap({ tool: true, small })}><span class="pic">${icons[t.icon]}</span><span>${t.label}</span></button>`;
  }

  private symbol(t: Trace) {
    if (!t.symbol) return html`<span></span>`;
    return html`<span class="symbol ${t.symbol}">${t.symbol === "line" ? nothing : html`<button aria-label="Smoothing"><sup>1</sup>/<sub>6</sub></button>`}</span>`;
  }

  render() {
    return html`
      <header class="titlebar">
        ${ico(20, 20, svg`<rect x="0.500" y="0.500" width="19" height="19" fill="#d8dcd8" stroke="#999"/><path d="M1 10Q8 4 12 7L19 12V19H1z" fill="#777"/><path d="M4 14Q9 9 13 13" stroke="#fff" stroke-width="2" fill="none"/><circle cx="11" cy="6" r="3" fill="#b01c28"/><path d="M6 3l3 3M14 9l4 8M3 17h7" stroke="#1d2524" stroke-width="2"/>`)}
        <h1>REW V5.20.13</h1>
        <div class="window">
          <button aria-label="Minimize">${ico(12, 12, svg`<path d="M0 6.500H12" stroke="#111"/>`)}</button>
          <button aria-label="Restore">${ico(12, 12, svg`<rect x="0.500" y="2.500" width="9" height="9" rx="1.500" fill="none" stroke="#111"/><path d="M3 .5H10Q11.500 .5 11.500 2V9" fill="none" stroke="#111"/>`)}</button>
          <button aria-label="Close">${ico(12, 12, svg`<path d="M0 0L12 12M12 0L0 12" stroke="#111"/>`)}</button>
        </div>
      </header>
      <nav class="menubar">${menus.map(([a, u, b]) => html`<button>${a}<u>${u}</u>${b}</button>`)}</nav>

      <main class="main">
        <div class="toolbar">
          <div class="tools file">${fileTools.map((t) => this.tool(t))}</div>
          <div class="tools view">${viewTools.map((t) => this.tool(t))}</div>
          ${this.tool({ label: "Preferences", icon: "wrench" })}
        </div>
        <div class="work">
          <aside class="side">
            <button class="collapse">Collapse ${ico(18, 18, svg`<circle cx="9" cy="9" r="9" fill="#f4f4f4"/><path d="M9 4L4.500 9L9 14M14 4L9.500 9L14 14" fill="none" stroke="#333" stroke-width="1.500"/>`)}</button>
            <div class="cards">
              <measurement-card .index=${1} name="Sep 5" stamp="05.09.2023 09:56:26" low="20" trace="#1a5ca8" .path=${thumb1}></measurement-card>
              <measurement-card .index=${2} name="Sep 5" stamp="05.09.2023 11:37:03" low="200" trace="#a56218" .path=${thumb2} selected></measurement-card>
            </div>
          </aside>
          <rew-scrollbar class="sidebar" .start=${10.700} .size=${14.500}></rew-scrollbar>
          <section class="graph">
            <div class="head">
              <div class="capture tools">${this.tool({ label: "Capture", icon: "camera" }, true)}</div>
              <div class="tabs" role="tablist">${tabs.map((t, i) => html`<button role="tab" aria-selected=${i === 0 ? "true" : "false"}>${t}</button>`)}</div>
              <div class="settings">${graphTools.map((t) => this.tool(t, true))}</div>
            </div>
            <spl-chart></spl-chart>
            <div class="legend">
              ${traces.map((t, i) => html`<div class="trace ${t.tone}">
                <input id="trace-${i}" type="checkbox" .checked=${true} ?disabled=${!t.on} />
                <label for="trace-${i}">${t.label}</label>
                ${this.symbol(t)}
                <span class="value">${t.value}</span>
              </div>`)}
            </div>
          </section>
        </div>
      </main>

      <footer class="status">
        <span class="mem">72/130MB</span><span class="rate">48 kHz</span><span class="bits">16-bit in, 16-bit out</span>
        <span class="mask"><span class="xs">XXXX XXXX  XXXX XXXX</span><span class="zeros">0000 0000  0000 0000</span></span>
        <span class="data">16-bit data</span><span class="peak">Peak input before clipping 171 dB SPL</span><span class="blank"></span>
      </footer>

      <div class="taskbar">
        <button class="weather"><span class="sun"></span><span>24°C<br />Sonnig</span></button>
        <div class="dock">
          <button class="start" aria-label="Start"><i></i><i></i><i></i><i></i></button>
          <label class="search">${ico(18, 20, svg`<circle cx="8" cy="8" r="6.500" fill="#5a6488" stroke="#fff" stroke-width="2"/><path d="M12 13L17 19" stroke="#fff" stroke-width="2"/>`)}
            <input type="search" placeholder="Suche" aria-label="Suche" /></label>
          ${taskIcons.map((a) => html`<button class="app ${a.state ?? ""}" aria-label=${a.name}>${a.icon}</button>`)}
        </div>
        <div class="tray">
          <button class="more" aria-label="Hidden icons">${ico(16, 12, svg`<path d="M2 9L8 3L14 9" fill="none" stroke="#fff" stroke-width="2"/>`)}</button>
          ${ico(20, 18, svg`<g fill="none" stroke="#fff" stroke-width="1.500"><path d="M1 7Q10-2 19 7"/><path d="M4 10Q10 4 16 10"/><path d="M7 13Q10 10 13 13"/></g><circle cx="10" cy="15" r="2" fill="#fff"/>`)}
          ${ico(20, 18, svg`<g fill="none" stroke="#fff" stroke-width="1.500"><path d="M1 6.500H4L8 2.500V15.500L4 11.500H1Z"/><path d="M11 6Q13 9 11 12M14 4Q17 9 14 14M16.500 2Q20.500 9 16.500 16"/></g>`)}
          ${ico(20, 18, svg`<rect x="1" y="5" width="16" height="11" rx="2" fill="none" stroke="#fff" stroke-width="1.500"/><path d="M7 7H15V14H3V11z" fill="#fff"/><path d="M18.500 8v5" stroke="#fff" stroke-width="2"/><path d="M4 0L1 7H4L3 11L7 4H4z" fill="#fff" stroke="#1f222e" stroke-width=".5"/>`)}
          <div class="clock">11:38<br />05.09.2023</div>
        </div>
      </div>
    `;
  }
}
